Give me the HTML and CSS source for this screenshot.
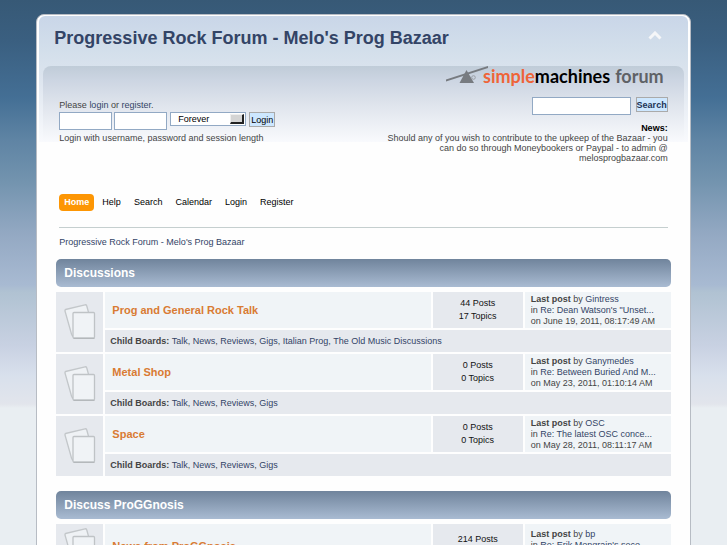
FILE: index.html
```html
<!DOCTYPE html>
<html lang="en">
  <head>
    <meta charset="UTF-8" />
    <meta name="viewport" content="width=device-width, initial-scale=1.0" />
    <title>Progressive Rock Forum - Melo's Prog Bazaar</title>

    <link rel="stylesheet" href="styles.css">
  </head>
  <body>
    <svg width="0" height="0" class="sprite" aria-hidden="true">
      <symbol id="board-icon" viewBox="0 0 32 36">
        <path d="M1.5 5.5 21 .8Q22.3 .6 22.700 1.800L30 28 8.500 32Q7.800 31 7.500 30L1 7Q.8 5.800 1.500 5.500Z" fill="#eff2f5" stroke="#c3c7ca" stroke-width="1.300" />
        <rect x="9" y="8.500" width="21.500" height="25.500" rx="1" fill="#f0f3f6" stroke="#bfc3c6" stroke-width="1.300" />
        <path d="M9.500 34.500H30.500" stroke="#b4b8bb" />
      </symbol>
    </svg>

    <div class="wrapper">
      <header class="header">
        <div class="header__top">
          <h1 class="header__title"><a href="#">Progressive Rock Forum - Melo's Prog Bazaar</a></h1>
          <button class="collapse" type="button" aria-label="Shrink or expand the header">
            <svg width="14" height="9" viewBox="0 0 14 9">
              <path d="M1.500 7.500 7 2l5.500 5.500" fill="none" stroke="#f5f6f8" stroke-width="3" />
            </svg>
          </button>
        </div>

        <div class="panel">
          <div class="logo">
            <svg class="logo__mark" width="44" height="18" viewBox="0 0 44 18">
              <path d="M0 13.500 42 0v2L0 15.500Z" fill="#777b80" />
              <path d="M20.500 4 28 17H13.500Z" fill="#777b80" />
              <circle cx="27.500" cy="11.500" r="1.800" fill="none" stroke="#9a9fa5" />
            </svg>
            <span class="logo__simple">simple</span><span class="logo__machines">machines</span>
            <span class="logo__forum">forum</span>
          </div>

          <div class="panel__columns">
            <form class="login" action="#">
              <p>Please <a href="#">login</a> or <a href="#">register</a>.</p>
              <div class="login__fields">
                <input class="field" type="text" name="user" aria-label="Username" />
                <input class="field" type="password" name="passwrd" aria-label="Password" />
                <span class="select">
                  <select name="cookielength" aria-label="Session length">
                    <option>1 Hour</option>
                    <option>1 Day</option>
                    <option>1 Week</option>
                    <option>1 Month</option>
                    <option selected>Forever</option>
                  </select>
                  <span class="select__arrow"></span>
                </span>
                <button class="btn">Login</button>
              </div>
              <p>Login with username, password and session length</p>
            </form>

            <div class="news">
              <form class="search" action="#">
                <input class="field field--search" type="text" name="search" aria-label="Search" />
                <button class="btn btn--search">Search</button>
              </form>
              <h2 class="news__title">News:</h2>
              <p>
                Should any of you wish to contribute to the upkeep of the Bazaar - you
                can do so through Moneybookers or Paypal - to admin @
                melosprogbazaar.com
              </p>
            </div>
          </div>
        </div>
      </header>

      <nav class="menu">
        <a class="menu__link menu__link--active" href="#">Home</a>
        <a class="menu__link" href="#">Help</a>
        <a class="menu__link" href="#">Search</a>
        <a class="menu__link" href="#">Calendar</a>
        <a class="menu__link" href="#">Login</a>
        <a class="menu__link" href="#">Register</a>
      </nav>

      <div class="crumbs"><a href="#">Progressive Rock Forum - Melo's Prog Bazaar</a></div>

      <main class="boards">
        <section class="category">
          <h3 class="category__title">Discussions</h3>
          <table class="board-list">
            <tbody>
              <tr>
                <td class="icon" rowspan="2"><svg width="32" height="36"><use href="#board-icon" /></svg></td>
                <td class="info"><a href="#">Prog and General Rock Talk</a></td>
                <td class="stats">44 Posts<br />17 Topics</td>
                <td class="lastpost">
                  <b>Last post</b> by <a href="#">Gintress</a><br />
                  in <a href="#">Re: Dean Watson's "Unset...</a><br />
                  on June 19, 2011, 08:17:49 AM
                </td>
              </tr>
              <tr>
                <td class="children" colspan="3">
                  <b>Child Boards:</b> <a href="#">Talk</a>, <a href="#">News</a>, <a href="#">Reviews</a>,
                  <a href="#">Gigs</a>, <a href="#">Italian Prog</a>, <a href="#">The Old Music Discussions</a>
                </td>
              </tr>
              <tr>
                <td class="icon" rowspan="2"><svg width="32" height="36"><use href="#board-icon" /></svg></td>
                <td class="info"><a href="#">Metal Shop</a></td>
                <td class="stats">0 Posts<br />0 Topics</td>
                <td class="lastpost">
                  <b>Last post</b> by <a href="#">Ganymedes</a><br />
                  in <a href="#">Re: Between Buried And M...</a><br />
                  on May 23, 2011, 01:10:14 AM
                </td>
              </tr>
              <tr>
                <td class="children" colspan="3">
                  <b>Child Boards:</b> <a href="#">Talk</a>, <a href="#">News</a>, <a href="#">Reviews</a>,
                  <a href="#">Gigs</a>
                </td>
              </tr>
              <tr>
                <td class="icon" rowspan="2"><svg width="32" height="36"><use href="#board-icon" /></svg></td>
                <td class="info"><a href="#">Space</a></td>
                <td class="stats">0 Posts<br />0 Topics</td>
                <td class="lastpost">
                  <b>Last post</b> by <a href="#">OSC</a><br />
                  in <a href="#">Re: The latest OSC conce...</a><br />
                  on May 28, 2011, 08:11:17 AM
                </td>
              </tr>
              <tr>
                <td class="children" colspan="3">
                  <b>Child Boards:</b> <a href="#">Talk</a>, <a href="#">News</a>, <a href="#">Reviews</a>,
                  <a href="#">Gigs</a>
                </td>
              </tr>
            </tbody>
          </table>
        </section>

        <section class="category">
          <h3 class="category__title">Discuss ProGGnosis</h3>
          <table class="board-list board-list--tall">
            <tbody>
              <tr>
                <td class="icon"><svg width="32" height="36"><use href="#board-icon" /></svg></td>
                <td class="info"><a href="#">News from ProGGnosis</a></td>
                <td class="stats">214 Posts<br />&nbsp;</td>
                <td class="lastpost">
                  <b>Last post</b> by <a href="#">bp</a><br />
                  in <a href="#">Re: Erik Mongrain's seco...</a><br />
                  &nbsp;
                </td>
              </tr>
            </tbody>
          </table>
        </section>
      </main>
    </div>
  </body>
</html>
```

FILE: styles.css
```css
* {
  box-sizing: border-box;
}

html {
  background: #e9eef2;
}

body {
  margin: 0;
  padding: 14px 0 0;
  font-family: "Liberation Sans", Arial, sans-serif;
  font-size: 9px;
  line-height: 10px;
  color: #444;
  background: linear-gradient(
      #375976 0,
      #3a5f80 40px,
      #446f95 98px,
      #5f84a4 140px,
      #7293ae 180px,
      #94a9c3 235px,
      #a8bad2 285px,
      #b0c2d2 292px,
      #c8d1e2 345px,
      #d8e0ec 375px,
      #e2e5ec 404px,
      #e9eef2 408px
    )
    no-repeat;
}

a {
  color: #334466;
  text-decoration: none;
}

p,
h1,
h2,
h3 {
  margin: 0;
}

.sprite {
  position: absolute;
}

.wrapper {
  width: 90%;
  margin: 0 auto;
  padding: 1px;
  background: #fefefe;
  border: 1px solid #b7bcc4;
  border-radius: 8px 8px 0 0;
}

/* header */
.header {
  margin: 0 1px;
  padding: 0 4px;
  border-radius: 6px 6px 0 0;
  background: linear-gradient(#c9d6e8, #d3dfeb 35px, #dce4ee 60px, #f9fafd 126px)
    no-repeat 0 0 / 100% 126px;
}

.header__top {
  display: flex;
  justify-content: space-between;
  height: 50px;
  padding: 10px 22px 0 11px;
}

.header__title {
  font-size: 18px;
  line-height: 24px;
}

.collapse {
  height: 18px;
  padding: 0;
  border: 0;
  background: none;
}

.panel {
  padding: 0 16px;
  min-height: 122px;
  border-radius: 8px 8px 0 0;
  background: linear-gradient(#c0ccd8, #ccd5e2 14px, #e0e5ed 40px, #f9fafd 76px)
    no-repeat 0 0 / 100% 76px;
}

.logo {
  display: flex;
  justify-content: flex-end;
  height: 20px;
  padding-right: 4px;
  font-family: Lato, sans-serif;
  font-size: 18px;
  font-weight: bold;
  line-height: 20px;
}

.logo__simple {
  color: #ef6438;
}

.logo__mark {
  margin-right: -7px;
}

.logo__machines {
  color: #000;
}

.logo__forum {
  margin-left: 5px;
  color: #5f6266;
}

.panel__columns {
  display: flex;
  justify-content: space-between;
  padding-top: 11px;
}

.login {
  padding-top: 3px;
}

.login__fields {
  display: flex;
  gap: 2px;
  margin: 2px 0 3px;
}

.field {
  width: 53px;
  height: 18px;
  padding: 1px 3px;
  border: 1px solid #92a9c4;
  background: #fff;
  font: inherit;
}

.field--search {
  width: 99px;
}

.select {
  display: flex;
  position: relative;
  width: 76px;
  height: 14px;
  margin: 0 1px;
}

.select select {
  width: 100%;
  padding: 0 7px;
  border: 1px solid #92a9c4;
  border-radius: 0;
  background: #fff;
  color: #000;
  font: inherit;
  appearance: none;
}

.select__arrow {
  position: absolute;
  top: 2px;
  right: 2px;
  width: 14px;
  height: 10px;
  border: 1px solid #eee;
  border-right: 2px solid #222;
  border-bottom: 2px solid #222;
  background: #d4d4d4;
  pointer-events: none;
}

.btn {
  height: 15px;
  padding: 0 1px;
  border: 1px solid #aaa;
  background: #cde7ff;
  color: #000;
  font: inherit;
}

.btn--search {
  padding: 0;
  font-weight: bold;
  color: #223355;
}

.news {
  width: 48%;
  text-align: right;
}

.news p {
  padding-left: 8px;
}

.search {
  display: flex;
  justify-content: flex-end;
  gap: 5px;
}

.news__title {
  margin-top: 8px;
  font-size: 9px;
  line-height: 10px;
  color: #000;
}

/* menu */
.menu {
  display: flex;
  gap: 3px;
  margin: 6px 21px 0;
  padding-bottom: 16px;
  border-bottom: 1px solid #c5cfcf;
}

.menu__link {
  padding: 0 5px;
  border-radius: 4px;
  line-height: 17px;
  color: #000;
}

.menu__link--active {
  background: #fd9604;
  color: #fff;
  font-weight: bold;
}

.crumbs {
  margin: 9px 21px 12px;
}

/* boards */
.boards {
  margin: 0 18px;
}

.category {
  margin-bottom: 13px;
}

.category__title {
  margin-bottom: 5px;
  padding: 0 8px;
  border-radius: 5px;
  background: linear-gradient(#70849c, #a9bbd2);
  color: #fff;
  font-size: 12px;
  line-height: 28px;
}

.board-list {
  width: 100%;
  border-collapse: separate;
  border-spacing: 0;
  table-layout: auto;
}

.board-list td {
  padding: 0;
  border-bottom: 2px solid #fefefe;
}

.board-list .icon {
  width: 49px;
  border-right: 2px solid #fefefe;
  background: #e6e9ee;
  text-align: center;
}

.icon svg {
  display: block;
  margin: 0 auto;
}

.board-list .info {
  height: 38px;
  padding: 0 7px;
  background: #f0f4f7;
  font-size: 11px;
  font-weight: bold;
}

.board-list--tall .info {
  height: 45px;
}

.info a {
  color: #d97b33;
}

.board-list .stats {
  width: 94px;
  border-left: 2px solid #fefefe;
  border-right: 2px solid #fefefe;
  background: #e6e9ee;
  color: #111;
  line-height: 13px;
  text-align: center;
}

.board-list .lastpost {
  width: 146px;
  padding: 0 5px 0 6px;
  background: #f0f4f7;
  font-size: 9px;
  line-height: 11px;
  white-space: nowrap;
}

.board-list .children {
  height: 24px;
  padding: 0 5px;
  background: #e6e9ee;
}
```
